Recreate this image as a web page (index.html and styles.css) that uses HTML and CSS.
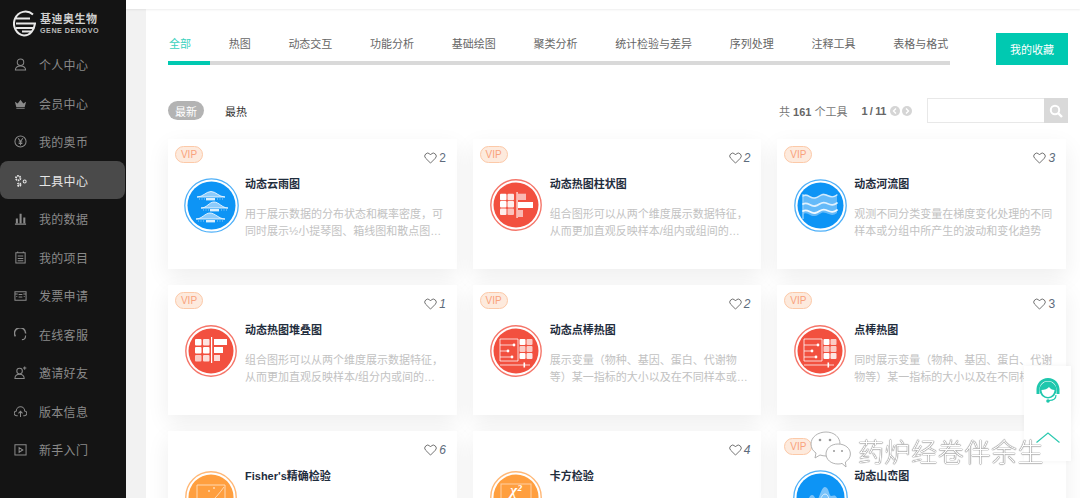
FILE: index.html
```html
<!DOCTYPE html>
<html lang="zh-CN">
<head>
<meta charset="utf-8">
<title>工具中心</title>
<link rel="stylesheet" href="styles.css">
</head>
<body>
<svg class="defs" width="0" height="0" aria-hidden="true">
  <defs>
    <symbol id="i-heat" viewBox="0 0 52 52">
      <circle cx="26" cy="26" r="25.200" fill="none" stroke="#f5766a" stroke-width="1.400"/>
      <circle cx="26" cy="26" r="22.500" fill="#f2503f"/>
      <g fill="#fff">
        <rect x="10" y="14.700" width="6.500" height="6.500" rx="1"/><rect x="17.500" y="14.700" width="6.500" height="6.500" rx="1" opacity=".85"/>
        <rect x="10" y="22" width="6.500" height="6.500" rx="1"/><rect x="17.500" y="22" width="6.500" height="6.500" rx="1" opacity=".9"/>
        <rect x="10" y="29.500" width="6.500" height="6.500" rx="1" opacity=".9"/><rect x="17.500" y="29.500" width="6.500" height="6.500" rx="1" opacity=".65"/>
        <rect x="26.500" y="13" width="1.100" height="26"/>
        <rect x="28" y="14.700" width="8" height="6.300" opacity=".6"/><rect x="28" y="23" width="15" height="6"/><rect x="28" y="31" width="5" height="7" opacity=".6"/>
      </g>
    </symbol>
    <symbol id="i-stack" viewBox="0 0 52 52">
      <circle cx="26" cy="26" r="25.200" fill="none" stroke="#f5766a" stroke-width="1.400"/>
      <circle cx="26" cy="26" r="22.500" fill="#f2503f"/>
      <g fill="#fff">
        <rect x="10" y="14" width="6.500" height="6.500" rx="1"/><rect x="18" y="14" width="6.500" height="6.500" rx="1" opacity=".85"/>
        <rect x="10" y="22" width="6.500" height="6.500" rx="1"/><rect x="18" y="22" width="6.500" height="6.500" rx="1"/>
        <rect x="10" y="30" width="6.500" height="6.500" rx="1" opacity=".7"/><rect x="18" y="30" width="6.500" height="6.500" rx="1" opacity=".8"/>
        <rect x="26" y="12" width="1.200" height="26"/>
        <rect x="29" y="14" width="13" height="6"/><rect x="29" y="22" width="9" height="6"/><rect x="29" y="30" width="6" height="6" opacity=".8"/>
      </g>
    </symbol>
    <symbol id="i-dot" viewBox="0 0 52 52">
      <circle cx="26" cy="26" r="25.200" fill="none" stroke="#f5766a" stroke-width="1.400"/>
      <circle cx="26" cy="26" r="22.500" fill="#f2503f"/>
      <path d="M10 14h18v22H10zM10 20h14M10 26h8M10 32h12M10 40h30" fill="none" stroke="#fff" stroke-width=".9" opacity=".85"/>
      <circle cx="24" cy="20" r="1.400" fill="#fff"/><circle cx="18" cy="26" r="1.400" fill="#fff"/><circle cx="22" cy="32" r="1.400" fill="#fff"/>
      <rect x="33.500" y="37.500" width="1.600" height="5" fill="#fff"/>
      <g fill="#fff">
        <rect x="29.500" y="14" width="6" height="6" rx="1"/><rect x="36.500" y="14" width="6" height="6" rx="1" opacity=".7"/>
        <rect x="29.500" y="21" width="6" height="6" rx="1" opacity=".7"/><rect x="36.500" y="21" width="6" height="6" rx="1" opacity=".7"/>
        <rect x="29.500" y="28" width="6" height="6" rx="1"/><rect x="36.500" y="28" width="6" height="6" rx="1" opacity=".85"/>
      </g>
    </symbol>
    <symbol id="i-rain" viewBox="0 0 55 55">
      <circle cx="27.500" cy="27.500" r="26.700" fill="none" stroke="#4fb0f8" stroke-width="1.300"/>
      <circle cx="27.500" cy="27.500" r="24" fill="#0d94f5"/>
      <g fill="#8ccbfb" stroke="#fff" stroke-width=".8">
        <path d="M13 19c6 0 9-5.500 14-5.500s8 5.500 14 5.500z"/>
        <path d="M17 30c6 0 8-6 13-6s8 6 14 6z"/>
        <path d="M12 41c6 0 9-6 14-6s9 6 15 6z"/>
      </g>
      <g fill="#fff" opacity=".85"><rect x="22" y="20" width="9" height="2.400"/><rect x="26" y="31" width="9" height="2.400"/><rect x="22" y="42" width="9" height="2.400"/></g>
      <g stroke="#fff" stroke-width=".7" stroke-dasharray="1 1.500" opacity=".8"><path d="M15 21h6M33 21h6M19 32h6M37 32h6M14 43h7M33 43h6"/></g>
    </symbol>
    <symbol id="i-river" viewBox="0 0 53 53">
      <circle cx="26.500" cy="26.500" r="25.700" fill="none" stroke="#4fb0f8" stroke-width="1.300"/>
      <circle cx="26.500" cy="26.500" r="23" fill="#0d94f5"/>
      <path d="M9 15v25" stroke="#fff" stroke-width="1" opacity=".8"/>
      <path d="M9 16c5-3 7 3 12 2s6-5 11-3 7 3 11 0v19c-4 3-6 2-11 0s-6 2-11 3-7-5-12-2z" fill="#8ccbfb" opacity=".7"/>
      <g fill="none" stroke="#fff" stroke-linecap="round">
        <path d="M9 17c5-3 7 3 12 2s6-5 11-3 7 3 11 0" stroke-width="1.400" opacity=".7"/>
        <path d="M9 25c5-3 7 3 12 2s6-5 11-3 7 3 11 0" stroke-width="1.800" opacity=".8"/>
        <path d="M9 32c5-3 7 3 12 2s6-5 11-3 7 3 11 0" stroke-width="1.800" opacity=".9"/>
      </g>
    </symbol>
    <symbol id="i-fisher" viewBox="0 0 52 52">
      <circle cx="26" cy="26" r="25.200" fill="none" stroke="#ffb877" stroke-width="1.400"/>
      <circle cx="26" cy="26" r="22.500" fill="#ff9f3f"/>
      <path d="M12 14h28v24H12zM13 36c8 0 16-6 26-20" fill="none" stroke="#ffd9b3" stroke-width="1"/>
      <circle cx="24" cy="20" r=".8" fill="#fff"/><circle cx="29" cy="17" r=".8" fill="#fff"/>
    </symbol>
    <symbol id="i-chi" viewBox="0 0 52 52">
      <circle cx="26" cy="26" r="25.200" fill="none" stroke="#ffb877" stroke-width="1.400"/>
      <circle cx="26" cy="26" r="22.500" fill="#ff9f3f"/>
      <rect x="11" y="13" width="30" height="26" fill="none" stroke="#ffd0a3"/>
    </symbol>
    <symbol id="i-mount" viewBox="0 0 55 55">
      <circle cx="27.500" cy="27.500" r="26.700" fill="none" stroke="#4fb0f8" stroke-width="1.300"/>
      <circle cx="27.500" cy="27.500" r="24" fill="#0d94f5"/>
      <path d="M11 36c3-2 5-11 8-11s3 5 5 5 4-13 8-13 4 9 6 9 4-2 6 2v22H11z" fill="#9fd3fb" opacity=".75"/>
      <path d="M11 40c3-2 5-9 8-9s3 4 5 4 4-11 8-11 4 8 6 8 4-1 6 2" fill="none" stroke="#fff" opacity=".7"/>
    </symbol>
    <symbol id="i-heart" viewBox="0 0 14 13">
      <path d="M7 12L1.700 6.700a3.200 3.200 0 0 1 4.600-4.500L7 3l.7-.8a3.200 3.200 0 0 1 4.600 4.500z"/>
    </symbol>
  </defs>
</svg>

<div class="app">
  <nav class="side">
    <div class="logo">
      <svg class="logo-mark" width="23" height="28" viewBox="0 0 23 28"><path d="M20 5.500A11.500 12 0 1 0 11 26.500c6 0 10-5 11-12H3M3 9.500h14M3 19h18M9 22.500h10" fill="none" stroke="#e8e8e8" stroke-width="2"/></svg>
      <div class="logo-text"><span class="logo-cn">基迪奥生物</span><span class="logo-en">GENE DENOVO</span></div>
    </div>
    <a class="nav-item"><svg class="nav-ico" viewBox="0 0 14 14"><circle cx="7" cy="4.500" r="3.500"/><path d="M1.500 13c0-3 2-4.500 5.500-4.500s5.500 1.500 5.500 4.500z"/></svg><span>个人中心</span></a>
    <a class="nav-item"><svg class="nav-ico" viewBox="0 0 14 14"><path class="solid" d="M1 5l3 2 3-4 3 4 3-2-1.500 6h-9zM2.500 12h9v1h-9z"/></svg><span>会员中心</span></a>
    <a class="nav-item"><svg class="nav-ico" viewBox="0 0 14 14"><circle cx="7" cy="7" r="6"/><path d="M4.500 3.500L7 7l2.500-3.500M7 7v4M5 7.500h4M5 9.200h4"/></svg><span>我的奥币</span></a>
    <a class="nav-item active"><svg class="nav-ico" viewBox="0 0 14 14"><circle class="ring" cx="4.500" cy="4.500" r="2.400"/><circle cx="11.500" cy="8" r="1.600"/><circle class="ring" cx="5.500" cy="11.500" r="1.500"/></svg><span>工具中心</span></a>
    <a class="nav-item"><svg class="nav-ico" viewBox="0 0 14 14"><path class="solid" d="M1 12.500h12v1.200H1zM2 7h2.200v5H2zM6 2h2.200v10H6zM10 6h2.200v6H10z"/></svg><span>我的数据</span></a>
    <a class="nav-item"><svg class="nav-ico" viewBox="0 0 14 14"><path d="M2 2h10v11H2zM4 .500v2M10 .500v2M4 5.500h6M4 8h6M4 10.500h6"/></svg><span>我的项目</span></a>
    <a class="nav-item"><svg class="nav-ico" viewBox="0 0 14 14"><path d="M1 3h12v9H1zM1 5.500h3M10 5.500h3M5 6h4M5 8.500h4M2.500 8h1M10.500 8h1"/></svg><span>发票申请</span></a>
    <a class="nav-item"><svg class="nav-ico" viewBox="0 0 14 14"><path d="M1.500 9A6 6 0 1 1 12.500 6" stroke-width="1.600"/><path d="M12.500 8c0 3-2 4.500-4 4.500" stroke-width="1.200"/></svg><span>在线客服</span></a>
    <a class="nav-item"><svg class="nav-ico" viewBox="0 0 14 14"><circle cx="6" cy="5.500" r="3"/><path d="M1 13.500c0-3 2-4.500 5-4.500s5 1.500 5 4.500zM11.500 .500v3.500M9.700 2.200h3.600"/></svg><span>邀请好友</span></a>
    <a class="nav-item"><svg class="nav-ico" viewBox="0 0 14 14"><path d="M4 11.500H3a2.500 2.500 0 0 1-.500-5 4.500 4.500 0 0 1 9 0 2.500 2.500 0 0 1-.500 5h-1M7 13V7M4.800 9L7 6.800 9.200 9"/></svg><span>版本信息</span></a>
    <a class="nav-item"><svg class="nav-ico" viewBox="0 0 14 14"><path d="M1 2h12v11H1zM5.500 5l4 2.500-4 2.500z"/></svg><span>新手入门</span></a>
  </nav>

  <div class="main">
    <div class="topbar"></div>
    <div class="stage">
      <section class="panel">
        <header class="head">
          <div class="tabs-wrap">
            <div class="tabs">
              <a class="tab on">全部</a><a class="tab">热图</a><a class="tab">动态交互</a><a class="tab">功能分析</a><a class="tab">基础绘图</a><a class="tab">聚类分析</a><a class="tab">统计检验与差异</a><a class="tab">序列处理</a><a class="tab">注释工具</a><a class="tab">表格与格式</a>
            </div>
            <div class="track"><div class="track-on"></div></div>
          </div>
          <a class="fav">我的收藏</a>
        </header>

        <div class="toolbar">
          <a class="pill">最新</a>
          <a class="hot">最热</a>
          <div class="meta">
            <span class="count">共 <b>161</b> 个工具</span>
            <span class="pager"><b>1 / 11</b></span>
            <span class="arrows">
              <svg class="arrow" viewBox="0 0 10 10"><circle cx="5" cy="5" r="5"/><path d="M6 2.500L3.500 5 6 7.500"/></svg>
              <svg class="arrow" viewBox="0 0 10 10"><circle cx="5" cy="5" r="5"/><path d="M4 2.500L6.500 5 4 7.500"/></svg>
            </span>
            <div class="search">
              <div class="search-in"></div>
              <div class="search-btn"><svg width="14" height="14" viewBox="0 0 14 14"><circle cx="6" cy="6" r="4.200" fill="none" stroke="#fff" stroke-width="2"/><path d="M9 9l4 4" stroke="#fff" stroke-width="2.400"/></svg></div>
            </div>
          </div>
        </div>

        <div class="grid">
          <article class="card">
            <div class="card-top"><span class="vip">VIP</span><span class="like"><svg class="heart"><use href="#i-heart"/></svg><i class="num">2</i></span></div>
            <div class="card-body">
              <div class="ico"><svg width="55" height="55"><use href="#i-rain"/></svg></div>
              <div class="txt"><h3>动态云雨图</h3><p>用于展示数据的分布状态和概率密度&#xFF0C;可同时展示½小提琴图、箱线图和散点图…</p></div>
            </div>
          </article>
          <article class="card">
            <div class="card-top"><span class="vip">VIP</span><span class="like"><svg class="heart"><use href="#i-heart"/></svg><i class="num slant">2</i></span></div>
            <div class="card-body">
              <div class="ico"><svg width="52" height="52"><use href="#i-heat"/></svg></div>
              <div class="txt"><h3>动态热图柱状图</h3><p>组合图形可以从两个维度展示数据特征&#xFF0C;从而更加直观反映样本/组内或组间的…</p></div>
            </div>
          </article>
          <article class="card">
            <div class="card-top"><span class="vip">VIP</span><span class="like"><svg class="heart"><use href="#i-heart"/></svg><i class="num slant">3</i></span></div>
            <div class="card-body">
              <div class="ico"><svg width="53" height="53"><use href="#i-river"/></svg></div>
              <div class="txt"><h3>动态河流图</h3><p>观测不同分类变量在梯度变化处理的不同样本或分组中所产生的波动和变化趋势</p></div>
            </div>
          </article>

          <article class="card">
            <div class="card-top"><span class="vip">VIP</span><span class="like"><svg class="heart"><use href="#i-heart"/></svg><i class="num slant">1</i></span></div>
            <div class="card-body">
              <div class="ico"><svg width="52" height="52"><use href="#i-stack"/></svg></div>
              <div class="txt"><h3>动态热图堆叠图</h3><p>组合图形可以从两个维度展示数据特征&#xFF0C;从而更加直观反映样本/组分内或间的…</p></div>
            </div>
          </article>
          <article class="card">
            <div class="card-top"><span class="vip">VIP</span><span class="like"><svg class="heart"><use href="#i-heart"/></svg><i class="num slant">2</i></span></div>
            <div class="card-body">
              <div class="ico"><svg width="52" height="52"><use href="#i-dot"/></svg></div>
              <div class="txt"><h3>动态点棒热图</h3><p>展示变量&#xFF08;物种、基因、蛋白、代谢物等&#xFF09;某一指标的大小以及在不同样本或…</p></div>
            </div>
          </article>
          <article class="card">
            <div class="card-top"><span class="vip">VIP</span><span class="like"><svg class="heart"><use href="#i-heart"/></svg><i class="num">3</i></span></div>
            <div class="card-body">
              <div class="ico"><svg width="52" height="52"><use href="#i-dot"/></svg></div>
              <div class="txt"><h3>点棒热图</h3><p>同时展示变量&#xFF08;物种、基因、蛋白、代谢物等&#xFF09;某一指标的大小以及在不同样…</p></div>
            </div>
          </article>

          <article class="card">
            <div class="card-top"><span class="like"><svg class="heart"><use href="#i-heart"/></svg><i class="num slant">6</i></span></div>
            <div class="card-body">
              <div class="ico"><svg width="52" height="52"><use href="#i-fisher"/></svg></div>
              <div class="txt"><h3>Fisher's精确检验</h3></div>
            </div>
          </article>
          <article class="card">
            <div class="card-top"><span class="like"><svg class="heart"><use href="#i-heart"/></svg><i class="num slant">4</i></span></div>
            <div class="card-body">
              <div class="ico"><svg width="52" height="52"><use href="#i-chi"/><text x="26" y="24" text-anchor="middle" class="chi-text">χ²</text></svg></div>
              <div class="txt"><h3>卡方检验</h3></div>
            </div>
          </article>
          <article class="card">
            <div class="card-top"><span class="vip">VIP</span></div>
            <div class="card-body">
              <div class="ico"><svg width="55" height="55"><use href="#i-mount"/></svg></div>
              <div class="txt"><h3>动态山峦图</h3></div>
            </div>
          </article>
        </div>
      </section>
    </div>
  </div>
</div>

<aside class="float">
  <svg width="26" height="28" viewBox="0 0 26 28"><path d="M13 1C6 1 2 6 1.500 12v5h3v-5C5 7 8 4 13 4s8 3 8.500 8v5h3v-5C24 6 20 1 13 1z" fill="#1fc7ad"/><circle cx="13" cy="13" r="8.500" fill="#1fc7ad"/><path d="M6.500 13c3 0 6-1 7.500-3 1.500 2 3 3 5.500 3-.3 4-3 7-6.500 7s-6.300-3-6.500-7z" fill="#fff"/><path d="M21 18c0 3.500-3 5.500-7 5.500" fill="none" stroke="#1fc7ad" stroke-width="1.200"/><circle cx="13" cy="24" r="1.800" fill="#1fc7ad"/></svg>
  <svg class="up" width="24" height="11" viewBox="0 0 24 11"><path d="M.5 10.500L12 1l11.500 9.500" fill="none" stroke="#2cc9b0" stroke-width="1.200"/></svg>
</aside>

<div class="mark">
  <svg class="mark-ico" width="42" height="37" viewBox="0 0 42 37"><g fill="#fff" stroke="#aaa" stroke-width=".9"><path d="M16 1C8 1 1 6 1 13c0 4 2 7 5 9l-1 5 5-3c2 .6 4 1 6 1 8 0 14-5 14-12S24 1 16 1z"/><path d="M28 13c-7 0-12 4.500-12 10s5 10 12 10c1.500 0 3-.2 4-.6l4 3.600-.6-5c3-2 5-4.800 5-8 0-5.500-5-10-12.400-10z"/></g><g fill="#999"><circle cx="10" cy="9" r="1.300"/><circle cx="20" cy="9" r="1.300"/><circle cx="24" cy="20" r="1"/><circle cx="32" cy="20" r="1"/></g></svg>
  <span class="mark-text">药炉经卷伴余生</span>
</div>
</body>
</html>
```

FILE: styles.css
```css
* { box-sizing: border-box; }
html, body { margin: 0; height: 100%; overflow: hidden; background: #fff; }
body { font-family: "Liberation Sans", "Noto Sans CJK SC", sans-serif; font-size: 11px; color: #555; }
a { text-decoration: none; color: inherit; }
.defs { display: block; height: 0; }
.app { display: flex; height: 498px; }

.side { width: 126px; flex: none; background: #141414; padding-right: 1px; }
.logo { height: 45.250px; display: flex; align-items: center; gap: 4px; padding: 1px 0 0 13px; }
.logo-mark { flex: none; margin-top: -1px; }
.logo-text { display: flex; flex-direction: column; color: #ccc; line-height: 1; font-weight: 700; margin-top: 2px; }
.logo-cn { font-size: 11px; letter-spacing: .5px; color: #d0d0d0; }
.logo-en { font-size: 7.200px; letter-spacing: .5px; margin-top: 2px; color: #bbb; }
.nav-item { height: 38.500px; display: flex; align-items: center; gap: 12px; padding-left: 14px; color: #8a8a8a; font-size: 12px; letter-spacing: .3px; border-radius: 8px; }
.nav-ico { width: 13px; height: 13px; flex: none; fill: none; stroke: #8a8a8a; stroke-width: 1.100; }
.nav-ico .solid { fill: #8a8a8a; stroke: none; }
.nav-item.active { background: #4a4a4a; color: #e6e6e6; }
.nav-item.active .nav-ico { stroke: #e6e6e6; }
.nav-item.active .ring { stroke-width: 2; stroke-dasharray: 1.500 .8; }

.main { flex: 1; min-width: 0; display: flex; flex-direction: column; background: #f2f2f2; }
.topbar { height: 9px; flex: none; background: #fff; box-shadow: 0 1px 2px rgba(0, 0, 0, .07); position: relative; }
.stage { flex: 1; min-height: 0; padding-left: 20px; }
.panel { height: 100%; background: #fff; padding: 24px 12px 0 22px; overflow: hidden; }

.head { display: flex; justify-content: space-between; align-items: flex-end; }
.tabs-wrap { width: 782px; }
.tabs { display: flex; gap: 37.700px; height: 28px; line-height: 22px; padding-left: 1px; white-space: nowrap; color: #666; }
.tab.on { color: #3ad1bd; }
.track { height: 4px; background: #d9d9d9; }
.track-on { width: 42px; height: 100%; background: #00c9b1; }
.fav { width: 72px; height: 32px; background: #00c9b1; color: #fff; display: flex; align-items: center; justify-content: center; }

.toolbar { display: flex; align-items: center; height: 25px; margin-top: 33px; }
.pill { width: 36px; height: 19px; border-radius: 10px; background: #b3b3b3; color: #fff; display: flex; align-items: center; justify-content: center; }
.hot { margin-left: 21px; color: #333; }
.meta { margin-left: auto; display: flex; align-items: center; color: #777; }
.count b, .pager b { color: #666; }
.pager { margin-left: 14px; letter-spacing: -.4px; }
.arrows { display: flex; gap: 2px; margin-left: 4px; }
.arrow { width: 10px; height: 10px; fill: #d5d5d5; }
.arrow path { fill: none; stroke: #fff; stroke-width: 1.400; }
.search { margin-left: 15px; width: 141px; height: 25px; display: flex; border: 1px solid #e8e8e8; }
.search-in { flex: 1; }
.search-btn { width: 24px; margin: -1px -1px -1px 0; background: #d9d9d9; display: flex; align-items: center; justify-content: center; }

.grid { display: grid; grid-template-columns: repeat(3, 1fr); gap: 16px; margin: 16px 2px 0 0; padding-bottom: 40px; }
.card { height: 130px; background: #fff; box-shadow: 0 8px 22px rgba(0, 0, 0, .07); padding: 7px 11px 0 7px; }
.card-top { height: 31px; display: flex; justify-content: space-between; align-items: flex-start; }
.vip { width: 28px; height: 17px; border-radius: 9px; background: #fdeadd; border: 1px solid #fcc9a8; color: #f9a27c; font-size: 10px; line-height: 15px; text-align: center; }
.like { margin-left: auto; margin-top: 5px; display: flex; align-items: center; gap: 2px; height: 13px; }
.heart { width: 13px; height: 12px; fill: none; stroke: #666; stroke-width: 1; }
.num { font-style: normal; font-size: 12px; color: #5d6b7c; width: 6.500px; }
.num.slant { font-style: italic; }
.card-body { display: flex; margin-left: 8px; }
.ico { width: 56px; height: 56px; flex: none; display: flex; align-items: center; justify-content: center; margin-right: 6px; }
.chi-text { font: italic 700 15px "Liberation Serif", serif; fill: #fff; }
.txt { width: 200px; }
.txt h3 { margin: -1px 0 0; font-size: 11px; line-height: 16px; font-weight: 700; color: #1f2d3d; }
.txt p { margin: 14px 0 0; line-height: 17px; color: #c2c2c2; }

.float { position: fixed; left: 1024px; top: 366px; width: 47px; height: 95px; background: #fff; box-shadow: 0 0 6px rgba(0, 0, 0, .05); display: flex; flex-direction: column; align-items: center; padding-top: 11px; }
.up { margin-top: 27px; }
.mark { position: fixed; left: 810px; top: 431px; display: flex; align-items: center; gap: 6px; height: 40px; }
.mark-ico { margin-top: -4px; }
.mark-text { font-family: "Noto Sans CJK SC", sans-serif; font-weight: 300; font-size: 26px; letter-spacing: .6px; color: #fff; text-shadow: 0 0 1px #444, 0 0 1px #666; line-height: 40px; white-space: nowrap; }
```
